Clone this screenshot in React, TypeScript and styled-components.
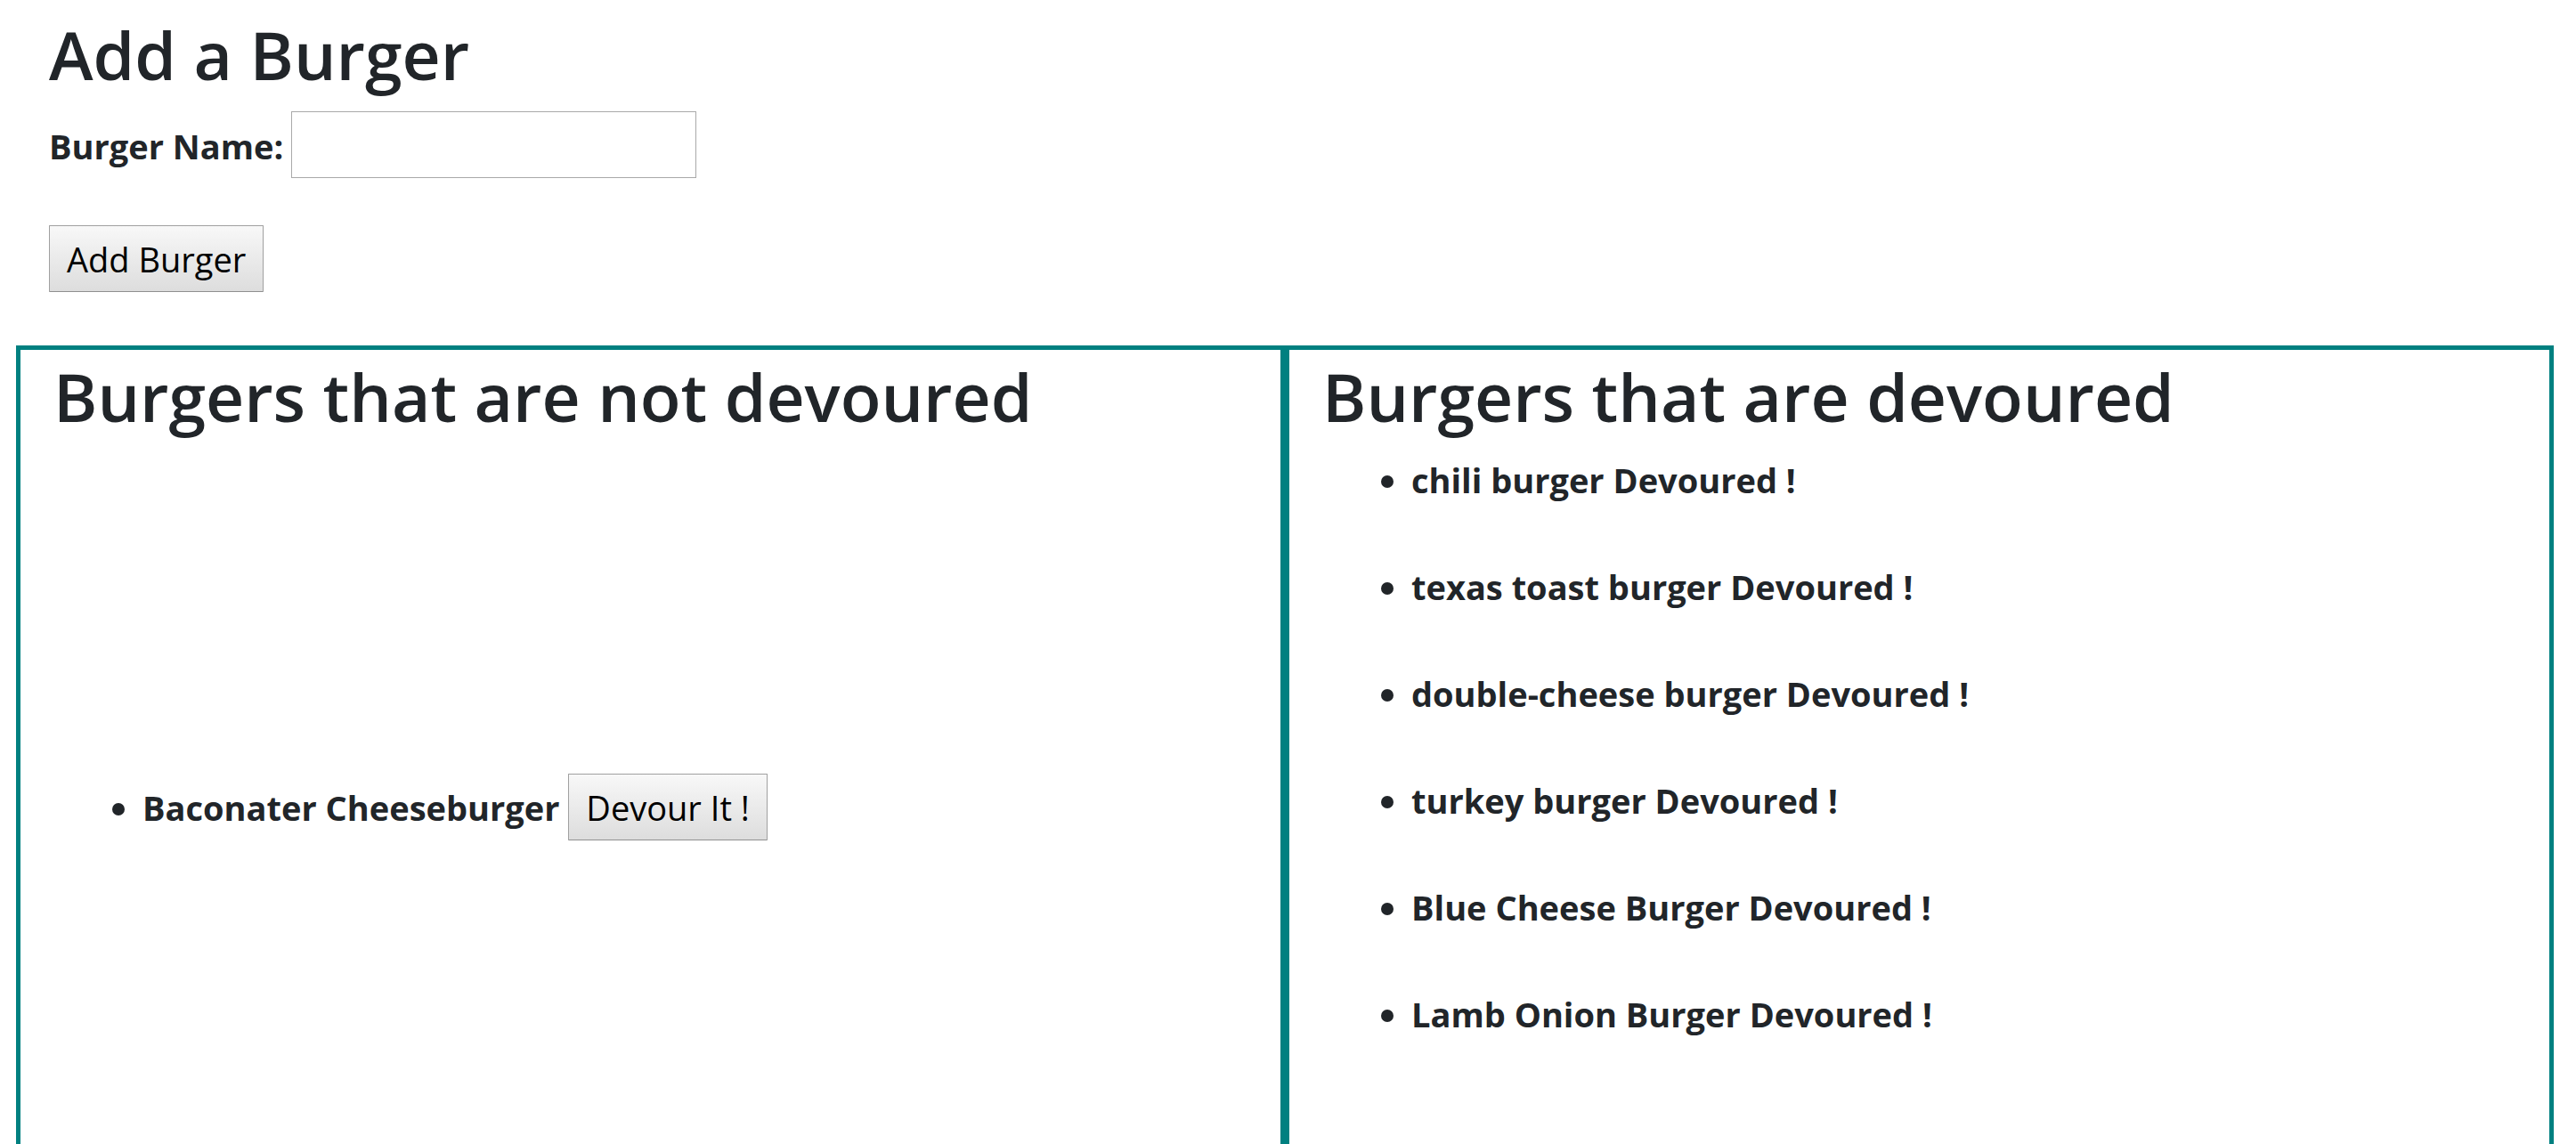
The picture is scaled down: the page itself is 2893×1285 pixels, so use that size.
import React, { useState } from "react";
import styled, { createGlobalStyle } from "styled-components";

const GlobalStyle = createGlobalStyle`
  *, *::before, *::after { box-sizing: border-box; }
  body {
    margin: 0;
    background: #fff;
    color: #212529;
    font-family: "Open Sans", "Noto Sans", sans-serif;
    font-size: 38px;
    line-height: 60px;
  }
`;

const Page = styled.main`
  display: flex;
  flex-direction: column;
  min-height: 100vh;
  padding: 13px 25px 0 18px;
`;

const Title = styled.h2`
  margin: 0 0 16px;
  font-size: 75px;
  font-weight: 600;
  line-height: 96px;
`;

const AddSection = styled.section`
  padding: 0 37px;
`;

const BurgerForm = styled.form`
  display: flex;
  flex-direction: column;
  align-items: flex-start;
  gap: 53px;
`;

const Field = styled.div`
  display: flex;
  align-items: center;
  gap: 9px;
`;

const Label = styled.label`
  padding-top: 2px;
  font-weight: 700;
`;

const TextInput = styled.input`
  width: 455px;
  height: 75px;
  padding: 2px 5px;
  border: 1px solid #a9a9a9;
  background: #fff;
  font: inherit;
`;

const Button = styled.button`
  height: 75px;
  padding: 0 19px;
  border: 1px solid #a0a0a0;
  border-bottom-color: #909090;
  border-radius: 1px;
  background: linear-gradient(#f8f8f8, #dddddd);
  color: #000;
  font: inherit;
  font-weight: 400;
`;

const Columns = styled.div`
  display: grid;
  flex: 1;
  grid-template-columns: 1fr 1fr;
  margin-top: 60px;
`;

const Column = styled.section`
  padding: 4px 37px 0;
  border: 5px solid #008080;
  border-bottom: 0;
`;

const BurgerList = styled.ul`
  display: grid;
  grid-auto-rows: 120px;
  margin: 0;
  padding: 0 0 0 100px;
`;

const BurgerItem = styled.li<{ $row?: number }>`
  grid-row: ${(p) => p.$row ?? "auto"};
  font-weight: 700;
`;

const waiting = [{ name: "Baconater Cheeseburger", row: 4 }];

const eaten = [
  "chili burger",
  "texas toast burger",
  "double-cheese burger",
  "turkey burger",
  "Blue Cheese Burger",
  "Lamb Onion Burger",
];

export default function App() {
  const [name, setName] = useState("");

  return (
    <>
      <GlobalStyle />
      <Page>
        <AddSection>
          <Title>Add a Burger</Title>
          <BurgerForm onSubmit={(e) => e.preventDefault()}>
            <Field>
              <Label htmlFor="burger-name">Burger Name:</Label>
              <TextInput
                id="burger-name"
                type="text"
                value={name}
                onChange={(e) => setName(e.target.value)}
              />
            </Field>
            <Button type="submit">Add Burger</Button>
          </BurgerForm>
        </AddSection>
        <Columns>
          <Column>
            <Title>Burgers that are not devoured</Title>
            <BurgerList>
              {waiting.map((b) => (
                <BurgerItem key={b.name} $row={b.row}>
                  {b.name} <Button type="button">Devour It !</Button>
                </BurgerItem>
              ))}
            </BurgerList>
          </Column>
          <Column>
            <Title>Burgers that are devoured</Title>
            <BurgerList>
              {eaten.map((b) => (
                <BurgerItem key={b}>{b} Devoured !</BurgerItem>
              ))}
            </BurgerList>
          </Column>
        </Columns>
      </Page>
    </>
  );
}
